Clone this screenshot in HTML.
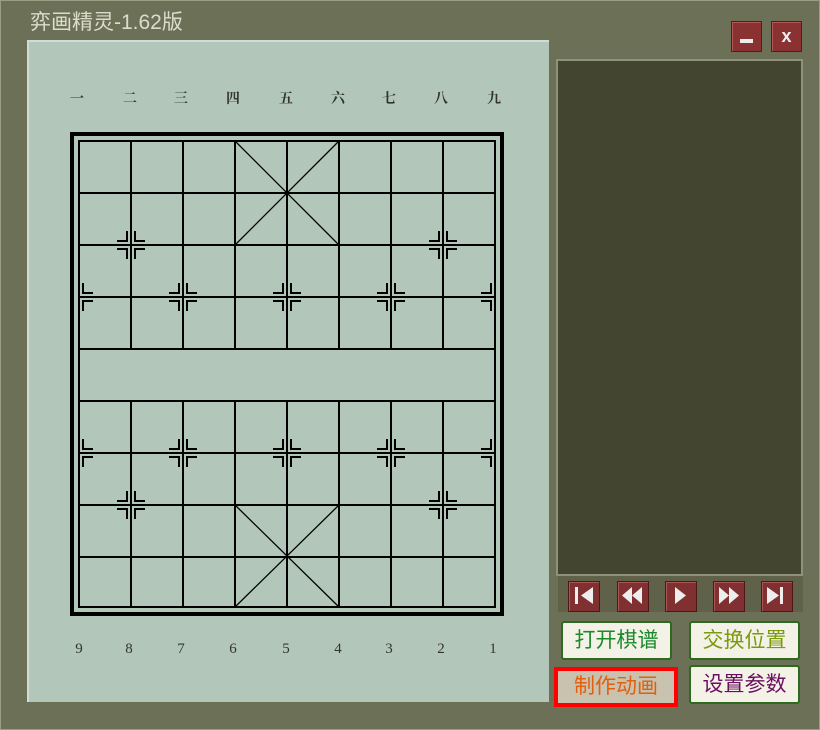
<!DOCTYPE html>
<html><head><meta charset="utf-8"><style>
body{margin:0;width:820px;height:730px;overflow:hidden;background:#6c7057;font-family:"Liberation Sans","Noto Sans CJK SC",sans-serif;position:relative}
.frame{position:absolute;left:0;top:0;width:818px;height:728px;border:1px solid #9a9c84}
.title{position:absolute;left:30px;top:6px;color:#dcdccc;font-size:21px}
.wb{position:absolute;top:21px;width:29px;height:29px;background:#8a3232;border:1px solid #5a1a1a;box-shadow:inset 1px 1px 0 #b05858;color:#eee;font-weight:bold;text-align:center;font-size:18px;line-height:28px}
.light{position:absolute;left:27px;top:40px;width:520px;height:660px;background:#b2c7ba;border-top:2px solid #d0ddd4;border-left:2px solid #d0ddd4}
.dark{position:absolute;left:556px;top:59px;width:243px;height:513px;background:#434530;border:2px solid #8e9278}
.nav{position:absolute;left:558px;top:576px;width:245px;height:36px;background:#5f6249}
.nb{position:absolute;top:581px;width:30px;height:29px;background:#803030;border:1px solid #4e1818;box-shadow:inset 1px 1px 0 #a55;}
.tb{position:absolute;width:107px;height:35px;background:#f4f1e6;border:2px solid #2d6a1e;border-radius:3px;font-size:21px;text-align:center;line-height:35px}
</style></head><body>
<div class="frame"></div>
<div class="title">弈画精灵-1.62版</div>
<div class="wb" style="left:731px"><div style="position:absolute;left:8px;top:17px;width:13px;height:4px;background:#eee"></div></div>
<div class="wb" style="left:771px">x</div>
<div class="light"></div>
<svg style="position:absolute;left:0;top:0" width="820" height="730">
<g font-family="Liberation Serif,Noto Serif CJK SC,serif" font-size="14" font-weight="bold" fill="#333" text-anchor="middle">
<text x="77" y="103">一</text><text x="130" y="103">二</text><text x="181" y="103">三</text><text x="233" y="103">四</text><text x="286" y="103">五</text><text x="338" y="103">六</text><text x="389" y="103">七</text><text x="441" y="103">八</text><text x="494" y="103">九</text>
</g>
<g font-family="Liberation Serif,serif" font-size="15" fill="#333" text-anchor="middle">
<text x="79" y="653">9</text><text x="129" y="653">8</text><text x="181" y="653">7</text><text x="233" y="653">6</text><text x="286" y="653">5</text><text x="338" y="653">4</text><text x="389" y="653">3</text><text x="441" y="653">2</text><text x="493" y="653">1</text>
</g>
<rect x="72" y="134" width="430" height="480" fill="none" stroke="#000" stroke-width="4"/>
<g stroke="#000" stroke-width="2" fill="none">
<rect x="79" y="141" width="416" height="466"/>
<path d="M79 193H495M79 245H495M79 297H495M79 349H495M79 401H495M79 453H495M79 505H495M79 557H495"/>
<path d="M131 141V349M183 141V349M235 141V349M287 141V349M339 141V349M391 141V349M443 141V349"/>
<path d="M131 401V607M183 401V607M235 401V607M287 401V607M339 401V607M391 401V607M443 401V607"/>
</g>
<g stroke="#000" stroke-width="1.3">
<path d="M235 141L339 245M339 141L235 245M235 505L339 607M339 505L235 607"/>
</g>
<g stroke="#000" stroke-width="2" fill="none">
<path d="
M127 231v10h-10M135 231v10h10M127 259v-10h-10M135 259v-10h10
M439 231v10h-10M447 231v10h10M439 259v-10h-10M447 259v-10h10
M127 491v10h-10M135 491v10h10M127 519v-10h-10M135 519v-10h10
M439 491v10h-10M447 491v10h10M439 519v-10h-10M447 519v-10h10
M179 283v10h-10M187 283v10h10M179 311v-10h-10M187 311v-10h10
M283 283v10h-10M291 283v10h10M283 311v-10h-10M291 311v-10h10
M387 283v10h-10M395 283v10h10M387 311v-10h-10M395 311v-10h10
M179 439v10h-10M187 439v10h10M179 467v-10h-10M187 467v-10h10
M283 439v10h-10M291 439v10h10M283 467v-10h-10M291 467v-10h10
M387 439v10h-10M395 439v10h10M387 467v-10h-10M395 467v-10h10
M83 283v10h10M83 311v-10h10M491 283v10h-10M491 311v-10h-10
M83 439v10h10M83 467v-10h10M491 439v10h-10M491 467v-10h-10"/>
</g>
</svg>
<div class="dark"></div>
<div class="nav"></div>
<div class="nb" style="left:568px"></div><div class="nb" style="left:617px"></div><div class="nb" style="left:665px"></div><div class="nb" style="left:713px"></div><div class="nb" style="left:761px"></div>
<svg style="position:absolute;left:0;top:0" width="820" height="730" fill="#eee">
<rect x="575" y="587" width="3" height="17"/><path d="M593 587v17l-12-8.5z"/>
<path d="M632 587v17l-10-8.5zM642 587v17l-10-8.5z"/>
<path d="M675 587v17l11-8.5z"/>
<path d="M719 587v17l10-8.5zM729 587v17l10-8.5z"/>
<path d="M767 587v17l12-8.5z"/><rect x="780" y="587" width="3" height="17"/>
</svg>
<div class="tb" style="left:561px;top:621px;color:#1a8a2a">打开棋谱</div>
<div class="tb" style="left:689px;top:621px;color:#7a9a10">交换位置</div>
<div class="tb" style="left:554px;top:667px;width:116px;height:32px;line-height:32px;border:4px solid #f00;border-radius:0;background:#c9c2ae;color:#e06010">制作动画</div>
<div class="tb" style="left:689px;top:665px;color:#6a1060">设置参数</div>
</body></html>
